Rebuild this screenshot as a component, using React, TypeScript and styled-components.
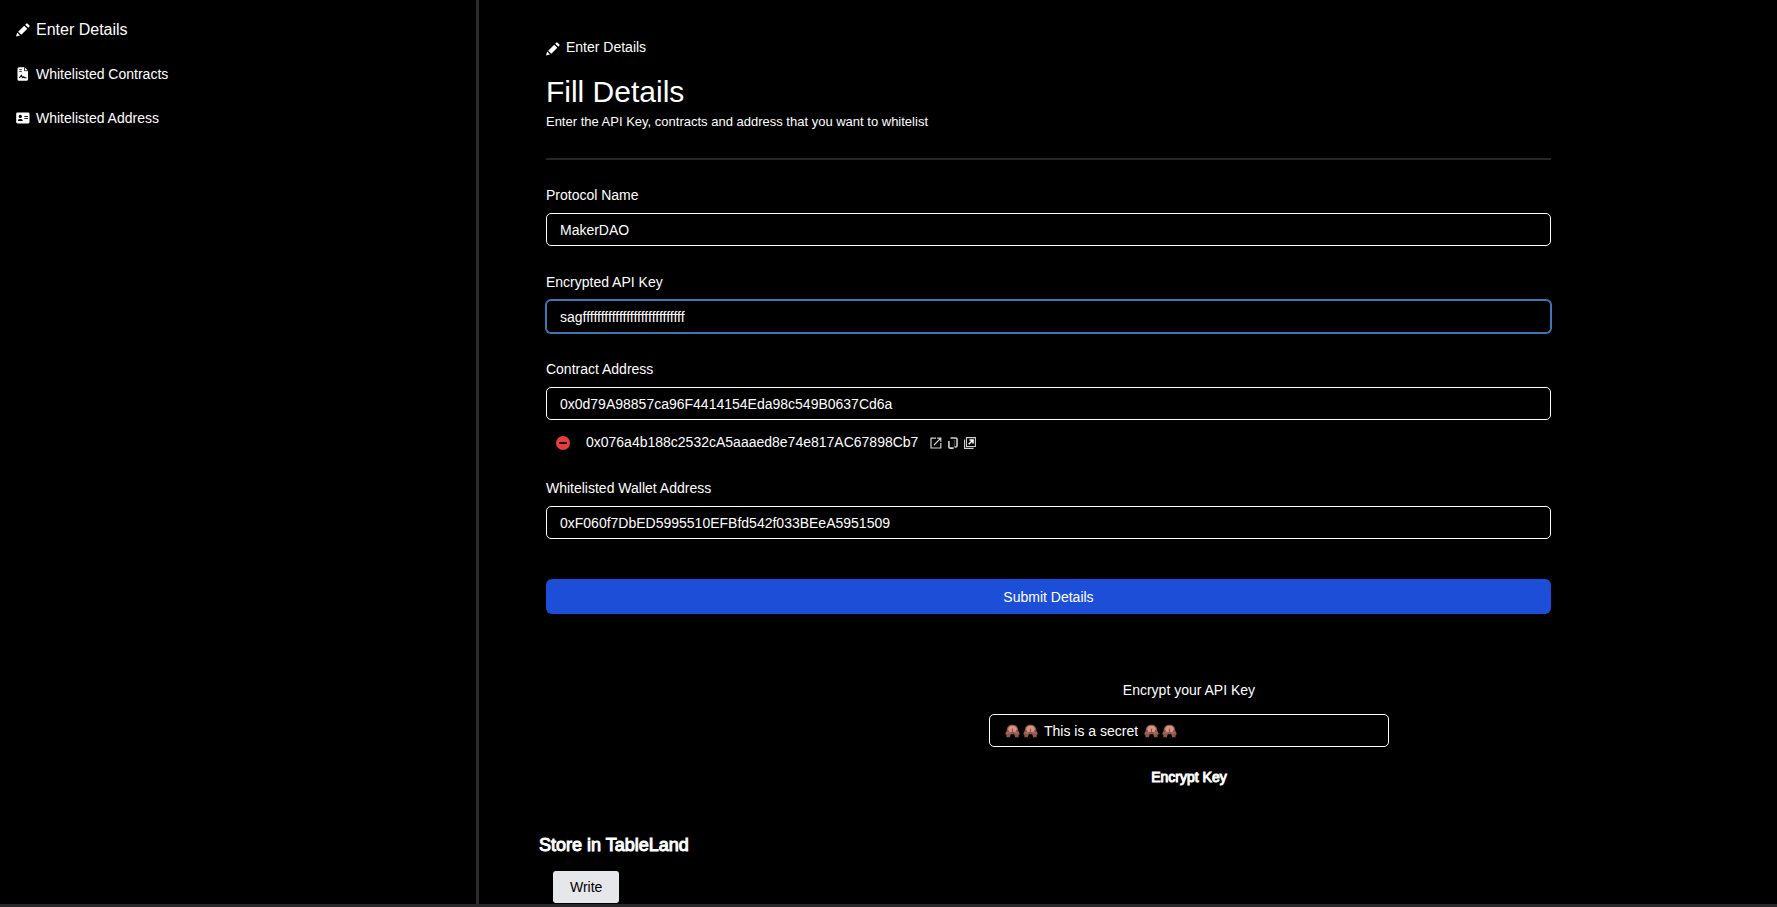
import React, { useEffect, useRef, useState } from "react";
import styled, { createGlobalStyle } from "styled-components";

const GlobalStyle = createGlobalStyle`
  *, *::before, *::after { box-sizing: border-box; }
  body { margin: 0; background: #000; color: #fff; font: 14px/20px "Liberation Sans", Arial, sans-serif; }
  button, input { font: inherit; color: inherit; }
`;

const Page = styled.div`
  display: grid;
  grid-template-columns: 1fr 2.71fr;
  min-height: 100vh;
  border-bottom: 3px solid #29272a;
`;

const Sidebar = styled.nav`
  display: flex;
  flex-direction: column;
  gap: 24px;
  padding: 20px 16px;
  border-right: 3px solid #2b2b2b;
`;

const NavLink = styled.a<{ $active?: boolean }>`
  display: flex;
  align-items: center;
  gap: 6px;
  color: #fff;
  text-decoration: none;
  font-size: ${(p) => (p.$active ? 16 : 14)}px;
`;

const Main = styled.main`
  padding: 37px 0 0 67px;
`;

const Column = styled.div`
  width: calc(100% - 226px);
`;

const Crumb = styled.div`
  display: flex;
  align-items: center;
  gap: 6px;
  svg { margin-top: 3px; }
`;

const Title = styled.h1`
  margin: 17px 0 3px;
  font-size: 30px;
  line-height: 36px;
  font-weight: 400;
`;

const Subtitle = styled.p`
  margin: 0;
  font-size: 13px;
  line-height: 18px;
`;

const Divider = styled.hr`
  margin: 27px 0 25px;
  border: 0;
  height: 2px;
  background: #262626;
`;

const Form = styled.form`
  display: flex;
  flex-direction: column;
  gap: 26px;
`;

const Field = styled.div`
  display: flex;
  flex-direction: column;
  gap: 8px;
`;

const TextInput = styled.input`
  width: 100%;
  height: 33px;
  padding: 0 13px;
  background: #000;
  border: 1px solid #fff;
  border-radius: 5px;
  outline: none;
  &:focus {
    border-color: #3e78b2;
    box-shadow: 0 0 0 1px #3e78b2;
  }
`;

const Entry = styled.div`
  display: flex;
  align-items: center;
  gap: 5px;
  margin-top: 4px;
  padding-left: 10px;
`;

const EntryAddress = styled.span`
  min-width: 339px;
`;

const IconButton = styled.button<{ $spaced?: boolean }>`
  display: flex;
  margin: 2px ${(p) => (p.$spaced ? 11 : 0)}px 0 0;
  padding: 0;
  border: 0;
  background: none;
  cursor: pointer;
`;

const Submit = styled.button`
  height: 35px;
  margin-top: 14px;
  border: 0;
  border-radius: 6px;
  background: #1d4ed8;
  cursor: pointer;
`;

const Encrypt = styled.section`
  display: flex;
  flex-direction: column;
  align-items: center;
  margin: 66px 0 0 55px;
`;

const SecretBox = styled.div`
  display: flex;
  align-items: center;
  gap: 3px;
  width: 400px;
  height: 33px;
  margin: 14px 0 20px;
  padding: 0 15px;
  border: 1px solid #fff;
  border-radius: 5px;
`;

const SecretInput = styled.input`
  field-sizing: content;
  padding: 0;
  margin: 0 3px;
  border: 0;
  outline: none;
  background: none;
`;

const TextButton = styled.button`
  padding: 0;
  border: 0;
  background: none;
  -webkit-text-stroke: 1px #fff;
  cursor: pointer;
`;

const Store = styled.section`
  margin: 46px 0 0 -7px;
`;

const StoreTitle = styled.h2`
  margin: 0 0 14px;
  font-size: 18px;
  line-height: 24px;
  font-weight: 400;
  -webkit-text-stroke: 1px #fff;
`;

const WriteButton = styled.button`
  display: block;
  height: 32px;
  margin-left: 14px;
  padding: 0 17px;
  border: 0;
  border-radius: 3px;
  background: #e5e7eb;
  color: #000;
  cursor: pointer;
`;

const PencilIcon = () => (
  <svg width="14" height="14" viewBox="0 0 14 14" fill="#fff" aria-hidden="true">
    <path d="M0 13.4 1.2 9.6 4 12.4z" />
    <path d="M2.2 8.7 8.2 2.7 11.3 5.8 5.3 11.8z" />
    <path d="M9.2 1.7 10.2.8a1 1 0 0 1 1.5 0l1.5 1.5a1 1 0 0 1 0 1.5l-.9 1z" />
  </svg>
);

const ContractIcon = () => (
  <svg width="14" height="14" viewBox="0 0 14 14" aria-hidden="true">
    <path d="M3 .2h5.6L12 3.6v8.7a1.5 1.5 0 0 1-1.5 1.5H3a1.5 1.5 0 0 1-1.5-1.5V1.7A1.5 1.5 0 0 1 3 .2z" fill="#fff" />
    <path d="M8.5.2v3.5H12M3.2 2.6h2.6M3.2 4.6h2.6" fill="none" stroke="#000" strokeWidth=".8" />
    <path d="M3.3 11 5.3 8.2l1.2 2.4 1.2-.9.8 1h2" fill="none" stroke="#000" strokeWidth="1.1" />
  </svg>
);

const CardIcon = () => (
  <svg width="14" height="12" viewBox="0 0 14 12" aria-hidden="true">
    <rect x=".2" y=".6" width="13.3" height="10.8" rx="1.3" fill="#fff" />
    <circle cx="4.3" cy="4.4" r="1.6" fill="#000" />
    <path d="M1.8 9.1a2.3 2 0 0 1 2-2h1a2.3 2 0 0 1 2 2z" fill="#000" />
    <path d="M8.3 4.5h3.6M8.3 6.5h3.6" stroke="#000" strokeWidth=".9" />
  </svg>
);

const RemoveIcon = () => (
  <svg width="14" height="14" viewBox="0 0 14 14" aria-hidden="true">
    <circle cx="7" cy="7" r="7" fill="#e53e3e" />
    <path d="M3 7h8" stroke="#26090a" strokeWidth="2" />
  </svg>
);

const OpenIcon = () => (
  <svg width="12" height="12" viewBox="0 0 12 12" fill="none" stroke="#d4d4d4" strokeWidth="1.2" aria-hidden="true">
    <path d="M6 1.2H1v9.8h9.8V6M7.2 1.2h3.6v3.6M10.6 1.4 4 8" />
  </svg>
);

const CopyIcon = () => (
  <svg width="12" height="12" viewBox="0 0 12 12" fill="none" stroke="#cfcfcf" aria-hidden="true">
    <path d="M3.5 1h5.2a1.3 1.3 0 0 1 1.3 1.3v6.4A1.3 1.3 0 0 1 8.7 10H7.5" strokeWidth="1.6" />
    <path d="M7.3 3v7" strokeWidth="1" strokeOpacity=".4" />
    <path d="M1.9 4v5.7a1.3 1.3 0 0 0 1.3 1.4h3.5" strokeWidth="1.6" />
  </svg>
);

const WindowIcon = () => (
  <svg width="12" height="12" viewBox="0 0 12 12" fill="none" stroke="#cfcfcf" aria-hidden="true">
    <path d="M2.5.6h8.9v8.9H2.5zM.6 2.5v8.9h9" strokeWidth="1.1" />
    <path d="M5.5 3h3.5v3.5M8.8 3.2 4.7 7.3" stroke="#fff" strokeWidth="1.6" />
  </svg>
);

const MonkeyIcon = () => (
  <svg width="15" height="14" viewBox="0 0 15 14" aria-hidden="true">
    <path d="M1.8 6.5C1.8 2.8 4 .8 7.5.8s5.7 2 5.7 5.7l1.6 3.2-1.2 1.6v2H10.2L9.2 10.2H5.8l-1 3.1H1.4v-2L.2 9.7z" fill="#8d574b" />
    <path d="M3.2 5.6C3.2 3 4.9 1.8 7.5 1.8s4.3 1.2 4.3 3.8L10.4 8H4.6z" fill="#dc9385" />
    <path d="M7.5 4.6v4" stroke="#8d574b" strokeWidth="1.2" />
    <path d="M1.4 9 5.6 8.6M13.6 9 9.4 8.6" stroke="#a96a5a" strokeWidth="1.6" />
  </svg>
);

export default function App() {
  const [name, setName] = useState("MakerDAO");
  const [apiKey, setApiKey] = useState("sag" + "f".repeat(28));
  const [contract, setContract] = useState("0x0d79A98857ca96F4414154Eda98c549B0637Cd6a");
  const [wallet, setWallet] = useState("0xF060f7DbED5995510EFBfd542f033BEeA5951509");
  const [secret, setSecret] = useState("This is a secret");
  const keyRef = useRef<HTMLInputElement>(null);

  useEffect(() => {
    const input = keyRef.current;
    input?.focus();
    input?.setSelectionRange(input.value.length, input.value.length);
  }, []);

  return (
    <>
      <GlobalStyle />
      <Page>
        <Sidebar>
          <NavLink href="#details" $active><PencilIcon />Enter Details</NavLink>
          <NavLink href="#contracts"><ContractIcon />Whitelisted Contracts</NavLink>
          <NavLink href="#addresses"><CardIcon />Whitelisted Address</NavLink>
        </Sidebar>
        <Main>
          <Column>
            <Crumb><PencilIcon />Enter Details</Crumb>
            <Title>Fill Details</Title>
            <Subtitle>Enter the API Key, contracts and address that you want to whitelist</Subtitle>
            <Divider />
            <Form onSubmit={(e) => e.preventDefault()}>
              <Field>
                <label htmlFor="name">Protocol Name</label>
                <TextInput id="name" value={name} onChange={(e) => setName(e.target.value)} />
              </Field>
              <Field>
                <label htmlFor="key">Encrypted API Key</label>
                <TextInput id="key" ref={keyRef} spellCheck={false} value={apiKey} onChange={(e) => setApiKey(e.target.value)} />
              </Field>
              <Field>
                <label htmlFor="contract">Contract Address</label>
                <TextInput id="contract" value={contract} onChange={(e) => setContract(e.target.value)} />
                <Entry>
                  <IconButton type="button" aria-label="Remove" $spaced><RemoveIcon /></IconButton>
                  <EntryAddress>0x076a4b188c2532cA5aaaed8e74e817AC67898Cb7</EntryAddress>
                  <IconButton type="button" aria-label="Open"><OpenIcon /></IconButton>
                  <IconButton type="button" aria-label="Copy"><CopyIcon /></IconButton>
                  <IconButton type="button" aria-label="Open in window"><WindowIcon /></IconButton>
                </Entry>
              </Field>
              <Field>
                <label htmlFor="wallet">Whitelisted Wallet Address</label>
                <TextInput id="wallet" value={wallet} onChange={(e) => setWallet(e.target.value)} />
              </Field>
              <Submit type="submit">Submit Details</Submit>
            </Form>
          </Column>
          <Encrypt>
            <label htmlFor="secret">Encrypt your API Key</label>
            <SecretBox>
              <MonkeyIcon />
              <MonkeyIcon />
              <SecretInput id="secret" value={secret} onChange={(e) => setSecret(e.target.value)} />
              <MonkeyIcon />
              <MonkeyIcon />
            </SecretBox>
            <TextButton type="button">Encrypt Key</TextButton>
          </Encrypt>
          <Store>
            <StoreTitle>Store in TableLand</StoreTitle>
            <WriteButton type="button">Write</WriteButton>
          </Store>
        </Main>
      </Page>
    </>
  );
}
